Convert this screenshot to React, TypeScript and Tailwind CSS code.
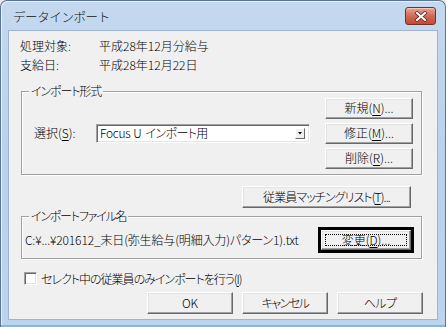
import React from "react";

const font = "[font-family:'Noto_Sans_CJK_JP','Noto_Sans',sans-serif]";

function Btn({
  children,
  className = "",
}: {
  children: React.ReactNode;
  className?: string;
}) {
  return (
    <div
      className={`flex items-center justify-center bg-[#f0f0f0] border border-t-white border-l-white border-r-[#696969] border-b-[#696969] shadow-[inset_-1px_-1px_0_#a0a0a0,inset_1px_1px_0_#e3e3e3] text-[12px] leading-none text-black ${className}`}
    >
      {children}
    </div>
  );
}

function U({ children }: { children: React.ReactNode }) {
  return <span className="underline underline-offset-[2px]">{children}</span>;
}

export default function App() {
  return (
    <div
      className={`w-[446px] h-[327px] bg-[#e9e9e9] ${font} font-light [font-feature-settings:'palt'] text-black`}
    >
      <div className="w-[446px] h-[327px] flex flex-col rounded-t-[7px] border border-[#5d7594] border-b-0 bg-gradient-to-b from-[#c4d9f0] via-[#b9d1eb] to-[#bcd4ee] shadow-[inset_1px_1px_0_#e6effa]">
        {/* title bar */}
        <div className="h-[29px] flex items-center pl-[12px] pr-[9px] shrink-0">
          <div className="text-[12.5px] leading-none pt-[4px] [font-feature-settings:normal] tracking-[-0.4px] text-[#111]">
            データインポート
          </div>
          <div className="ml-auto mt-[1px] w-[31px] h-[18px] rounded-[3px] border border-[#7a2f25] bg-gradient-to-b from-[#e7a595] via-[#d06a55] to-[#c24a35] shadow-[inset_0_1px_0_#f3c7bb] flex items-center justify-center">
            <svg width="14" height="11" viewBox="0 0 14 11">
              <path
                d="M3 2 L11 9 M11 2 L3 9"
                stroke="#5a1d14"
                strokeWidth="3.6"
                strokeLinecap="square"
              />
              <path
                d="M3 2 L11 9 M11 2 L3 9"
                stroke="#ffffff"
                strokeWidth="2.2"
                strokeLinecap="square"
              />
            </svg>
          </div>
        </div>
        {/* client area */}
        <div className="mx-[7px] h-[290px] bg-[#f0f0f0] border border-[#9fb4cf] shrink-0 flex flex-col text-[12px]">
          <div className="pt-[5px] pl-[11px]">
            <div className="h-[19px] flex items-center">
              <span className="w-[79px]">処理対象:</span>
              <span>平成28年12月分給与</span>
            </div>
            <div className="h-[19px] flex items-center">
              <span className="w-[79px]">支給日:</span>
              <span>平成28年12月22日</span>
            </div>
          </div>

          {/* group 1 */}
          <div className="relative mt-[17px] ml-[12px] w-[401px] h-[84px] border border-[#a0a0a0] shadow-[1px_1px_0_#fff,inset_1px_1px_0_#fff]">
            <span className="absolute left-[7px] top-[-9px] bg-[#f0f0f0] px-[2px] leading-[16px] tracking-[-1.1px]">
              インポート形式
            </span>
            <div className="h-full flex items-center pl-[12px] pr-[8px]">
              <span className="w-[62px]">
                選択(<U>S</U>):
              </span>
              <div className="w-[214px] h-[19px] bg-white border border-t-[#a0a0a0] border-l-[#a0a0a0] border-r-white border-b-white shadow-[inset_1px_1px_0_#696969,inset_-1px_-1px_0_#e3e3e3] flex items-center pl-[3px] pr-[4px]">
                <span className="leading-none tracking-[-0.3px]">
                  Focus<span className="ml-[3px]">U</span>
                  <span className="ml-[4px] tracking-[-0.6px]">インポート用</span>
                </span>
                <div className="ml-auto w-[10px] h-[11px] bg-[#f0f0f0] border border-t-white border-l-white border-r-[#696969] border-b-[#696969] flex items-center justify-center">
                  <svg width="4" height="3" viewBox="0 0 4 3">
                    <path d="M0 0 H4 L2 2.5 Z" fill="#000" />
                  </svg>
                </div>
              </div>
              <div className="ml-auto flex flex-col gap-[4px]">
                <Btn className="w-[88px] h-[21px]">
                  新規(<U>N</U>)...
                </Btn>
                <Btn className="w-[88px] h-[21px]">
                  修正(<U>M</U>)...
                </Btn>
                <Btn className="w-[88px] h-[21px]">
                  削除(<U>R</U>)...
                </Btn>
              </div>
            </div>
          </div>

          {/* matching list button */}
          <div className="mt-[11px] flex justify-end pr-[26px]">
            <Btn className="w-[169px] h-[22px] tracking-[-0.9px]">
              従業員マッチングリスト(<U>T</U>)...
            </Btn>
          </div>

          {/* group 2 */}
          <div className="relative mt-[8px] ml-[12px] w-[401px] h-[43px] border border-[#a0a0a0] shadow-[1px_1px_0_#fff,inset_1px_1px_0_#fff]">
            <span className="absolute left-[7px] top-[-9px] bg-[#f0f0f0] px-[2px] leading-[16px] tracking-[-1.2px]">
              インポートファイル名
            </span>
            <div className="h-full flex items-center pl-[3px] pr-[7px] pt-[4px]">
              <span className="leading-none tracking-[-0.15px]">
                C:¥...¥201612_末日(弥生給与(明細入力)パターン1).txt
              </span>
              <div className="ml-auto w-[96px] h-[26px] border-[3px] border-black">
                <Btn className="relative w-full h-full">
                  <span className="absolute inset-[3px] border border-dotted border-black" />
                  <span className="relative">
                    変更(<U>D</U>)...
                  </span>
                </Btn>
              </div>
            </div>
          </div>

          {/* checkbox */}
          <div className="mt-[10px] h-[19px] flex items-center pl-[15px]">
            <div className="w-[13px] h-[13px] bg-white border border-t-[#a0a0a0] border-l-[#a0a0a0] border-r-white border-b-white shadow-[inset_1px_1px_0_#696969,inset_-1px_-1px_0_#e3e3e3]" />
            <span className="ml-[4px] tracking-[-1px]">
              セレクト中の従業員のみインポートを行う(<U>I</U>)
            </span>
          </div>

          {/* bottom buttons */}
          <div className="mt-[4px] flex justify-end gap-[9px] pr-[14px]">
            <Btn className="w-[86px] h-[22px]">OK</Btn>
            <Btn className="w-[86px] h-[22px] tracking-[-1.5px]">キャンセル</Btn>
            <Btn className="w-[86px] h-[22px] tracking-[-0.5px]">ヘルプ</Btn>
          </div>
        </div>
        <div className="flex-1 border-b-[2px] border-[#67c6e6]" />
      </div>
    </div>
  );
}
